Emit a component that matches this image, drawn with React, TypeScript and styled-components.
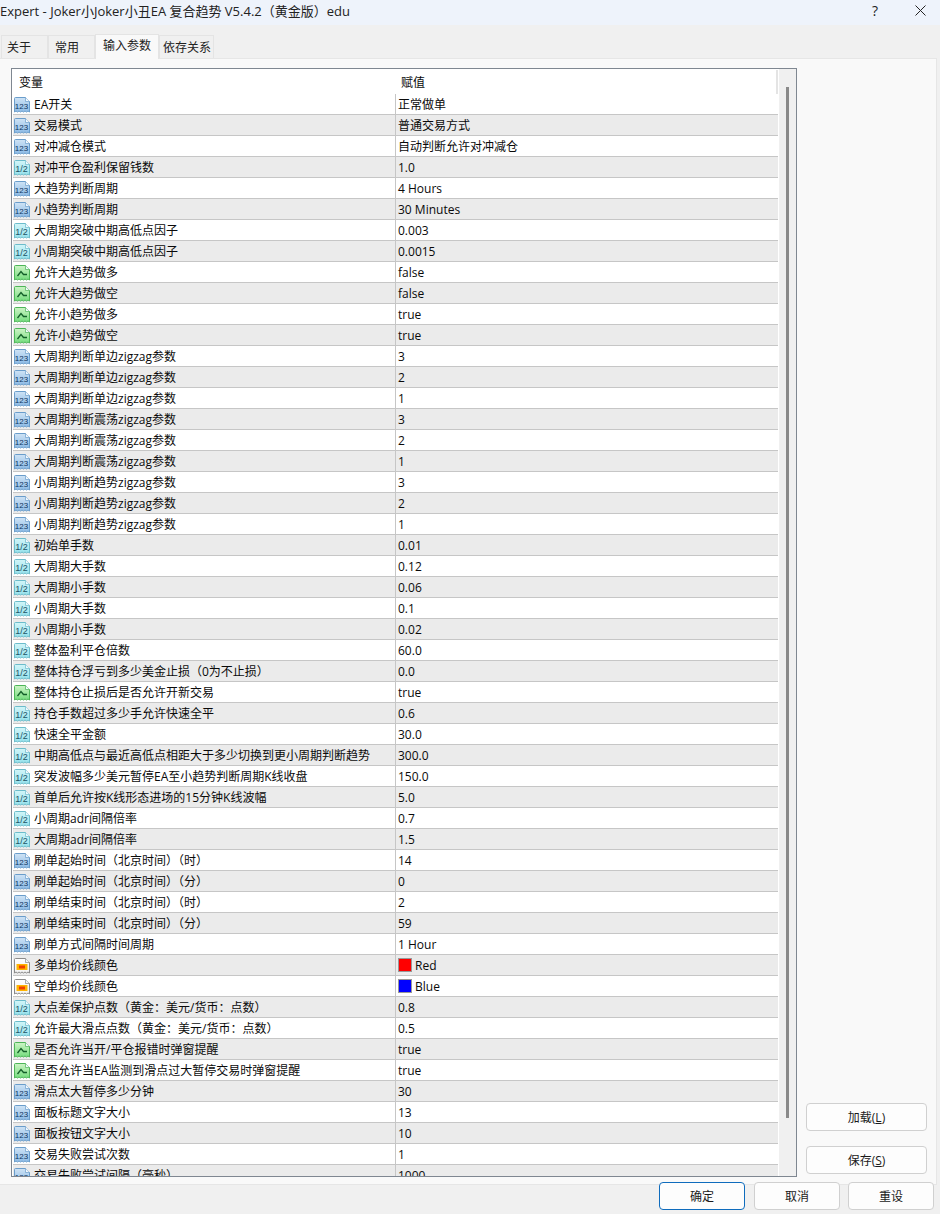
import React, { useId } from "react";
import styled, { createGlobalStyle } from "styled-components";

const Global = createGlobalStyle`
  html, body { margin: 0; padding: 0; background: #f0f0f0; overflow: hidden; }
  * { box-sizing: border-box; }
`;

const FONT = `"Open Sans", "Noto Sans CJK SC", sans-serif`;

const Win = styled.div`
  width: 940px; height: 1214px; display: flex; flex-direction: column;
  background: #f0f0f0; font-family: ${FONT}; font-size: 12px; color: #0a0a0a; overflow: hidden;
`;
const TitleBar = styled.div`
  height: 25px; flex: none; background: #eef3fb; display: flex; align-items: center;
  padding: 0 0 5px 0; font-size: 13px; color: #222;
`;
const TitleText = styled.div` flex: 1; white-space: nowrap; `;
const WinBtn = styled.div<{ $w: number }>`
  width: ${p => p.$w}px; display: flex; justify-content: center; align-items: center; font-size: 14px;
`;
const Tabs = styled.div`
  height: 33px; flex: none; display: flex; align-items: flex-end; padding: 9px 0 0 1px; position: relative; z-index: 1;
`;
const Tab = styled.div<{ $w: number; $pad: number; $active?: boolean }>`
  width: ${p => p.$w}px; height: ${p => (p.$active ? 25 : 23)}px;
  margin-bottom: ${p => (p.$active ? -1 : 0)}px;
  background: ${p => (p.$active ? "#f9f9f9" : "#f0f0f0")};
  border: 1px solid #e4e4e4; border-bottom: none; font-size: 12px;
  line-height: ${p => (p.$active ? 21 : 23)}px;
  padding-left: ${p => p.$pad}px; white-space: nowrap;
  color: #222;
`;
const Panel = styled.div`
  height: 1127px; flex: none; width: 937px; background: #f9f9f9; border: 1px solid #e6e6e6;
  border-left: none; display: flex; padding: 9px 0 0 11px;
`;
const ListBox = styled.div`
  width: 786px; height: 1109px; flex: none; border: 1px solid #7f8791; background: #fff;
  display: flex; overflow: hidden;
`;
const ListMain = styled.div` width: 766px; flex: none; overflow: hidden; padding-left: 1px; `;
const Head = styled.div`
  height: 25px; display: flex; align-items: center; position: relative; background: #fff; font-size: 12px;
`;
const HeadName = styled.div` width: 383px; padding-left: 6px; padding-top: 1px; flex: none; `;
const HeadVal = styled.div` padding-left: 5px; padding-top: 1px; `;
const HeadEnd = styled.div`
  position: absolute; right: 0; top: 1px; width: 2px; height: 24px; background: #e4e4e4;
`;
const Row = styled.div<{ $odd: boolean }>`
  height: 21px; display: flex; align-items: stretch; border-bottom: 1px solid #c6c6c6;
  background: ${p => (p.$odd ? "#ebebeb" : "#fff")}; white-space: nowrap;
`;
const NameCell = styled.div`
  width: 383px; flex: none; display: flex; align-items: center; gap: 4px; padding-left: 1px;
  border-right: 1px solid #c6c6c6; overflow: hidden;
`;
const ValueCell = styled.div` display: flex; align-items: center; gap: 3px; padding-left: 2px; `;
const Swatch = styled.span<{ $c: string }>`
  width: 14px; height: 14px; background: ${p => p.$c}; border: 1px solid #999; flex: none;
`;
const Scroll = styled.div` flex: 1; background: #f0f0f0; border-left: 1px solid #fff; position: relative; `;
const Thumb = styled.div`
  position: absolute; left: 7px; top: 18px; width: 3px; height: 1031px; background: #8a8a8a;
`;
const Side = styled.div`
  flex: 1; display: flex; flex-direction: column; gap: 15px; padding: 1035px 0 0 9px;
`;
const Button = styled.div<{ $w: number; $primary?: boolean }>`
  width: ${p => p.$w}px; height: 28px; flex: none; border-radius: 4px;
  border: 1px solid ${p => (p.$primary ? "#0f6cbd" : "#d0d0d0")};
  margin-right: ${p => (p.$primary ? 1 : 0)}px;
  background: #fdfdfd; display: flex; align-items: center; justify-content: center; font-size: 12px; color: #1a1a1a;
`;
const U = styled.span` text-decoration: underline; `;
const Footer = styled.div`
  flex: 1; display: flex; gap: 8px; padding: 0 0 0 659px; margin-top: -3px; position: relative;
`;

const IconSvg = styled.svg` flex: none; display: block; margin-top: 2px; `;
type Kind = "int" | "half" | "bool" | "color";

const WAVE = "M.5 1.5Q.5 .5 1.5 .5H11.5L15.5 4.5V15L14 14L12.5 15L11 14L9.5 15L8 14L6.5 15L5 14L3.5 15L2 14L.5 15Z";

const Icon = ({ kind }: { kind: Kind }) => {
  const id = useId();
  const cfg = {
    int: { a: "#cfe3f5", b: "#8dbbe6", s: "#6a9dcb" },
    half: { a: "#d2f5f8", b: "#96e2ec", s: "#6cbccb" },
    bool: { a: "#cdf4c6", b: "#75dd7e", s: "#4db558" },
    color: { a: "#ffffff", b: "#f2f2f2", s: "#8a8a8a" },
  }[kind];
  return (
    <IconSvg width="16" height="16" viewBox="0 0 16 16">
      <defs>
        <linearGradient id={id} x1="0" y1="0" x2="0" y2="1">
          <stop offset="0" stopColor={cfg.a} />
          <stop offset="1" stopColor={cfg.b} />
        </linearGradient>
      </defs>
      <path d={WAVE} fill={`url(#${id})`} stroke={cfg.s} strokeWidth="1" />
      <path d="M11.5 .5V4.5H15.5" fill="#f2f8fd" stroke={cfg.s} strokeWidth="0.7" />
      {kind === "int" && (
        <text x="7.5" y="11.5" textAnchor="middle" fontSize="8" fontWeight="400" fontFamily="Liberation Sans" fill="#0f3560">123</text>
      )}
      {kind === "half" && (
        <text x="7.5" y="11.5" textAnchor="middle" fontSize="9" fontFamily="Liberation Sans" fill="#1c5468">1/2</text>
      )}
      {kind === "bool" && <path d="M3.5 11L7 6.5L9.5 9.5H13" fill="none" stroke="#14602a" strokeWidth="1.3" />}
      {kind === "color" && (
        <>
          <rect x="2.5" y="6" width="11" height="6" fill="#ffb400" />
          <rect x="5" y="7.5" width="6" height="3" fill="#f04000" />
        </>
      )}
    </IconSvg>
  );
};

type P = [Kind, string, string];
const zig = (name: string): P[] => ["3", "2", "1"].map(v => ["int", name, v] as P);
const rows: P[] = [
  ["int", "EA开关", "正常做单"],
  ["int", "交易模式", "普通交易方式"],
  ["int", "对冲减仓模式", "自动判断允许对冲减仓"],
  ["half", "对冲平仓盈利保留钱数", "1.0"],
  ["int", "大趋势判断周期", "4 Hours"],
  ["int", "小趋势判断周期", "30 Minutes"],
  ["half", "大周期突破中期高低点因子", "0.003"],
  ["half", "小周期突破中期高低点因子", "0.0015"],
  ["bool", "允许大趋势做多", "false"],
  ["bool", "允许大趋势做空", "false"],
  ["bool", "允许小趋势做多", "true"],
  ["bool", "允许小趋势做空", "true"],
  ...zig("大周期判断单边zigzag参数"),
  ...zig("大周期判断震荡zigzag参数"),
  ...zig("小周期判断趋势zigzag参数"),
  ["half", "初始单手数", "0.01"],
  ["half", "大周期大手数", "0.12"],
  ["half", "大周期小手数", "0.06"],
  ["half", "小周期大手数", "0.1"],
  ["half", "小周期小手数", "0.02"],
  ["half", "整体盈利平仓倍数", "60.0"],
  ["half", "整体持仓浮亏到多少美金止损（0为不止损）", "0.0"],
  ["bool", "整体持仓止损后是否允许开新交易", "true"],
  ["half", "持仓手数超过多少手允许快速全平", "0.6"],
  ["half", "快速全平金额", "30.0"],
  ["half", "中期高低点与最近高低点相距大于多少切换到更小周期判断趋势", "300.0"],
  ["half", "突发波幅多少美元暂停EA至小趋势判断周期K线收盘", "150.0"],
  ["half", "首单后允许按K线形态进场的15分钟K线波幅", "5.0"],
  ["half", "小周期adr间隔倍率", "0.7"],
  ["half", "大周期adr间隔倍率", "1.5"],
  ["int", "刷单起始时间（北京时间）（时）", "14"],
  ["int", "刷单起始时间（北京时间）（分）", "0"],
  ["int", "刷单结束时间（北京时间）（时）", "2"],
  ["int", "刷单结束时间（北京时间）（分）", "59"],
  ["int", "刷单方式间隔时间周期", "1 Hour"],
  ["color", "多单均价线颜色", "Red"],
  ["color", "空单均价线颜色", "Blue"],
  ["half", "大点差保护点数（黄金：美元/货币：点数）", "0.8"],
  ["half", "允许最大滑点点数（黄金：美元/货币：点数）", "0.5"],
  ["bool", "是否允许当开/平仓报错时弹窗提醒", "true"],
  ["bool", "是否允许当EA监测到滑点过大暂停交易时弹窗提醒", "true"],
  ["int", "滑点太大暂停多少分钟", "30"],
  ["int", "面板标题文字大小", "13"],
  ["int", "面板按钮文字大小", "10"],
  ["int", "交易失败尝试次数", "1"],
  ["int", "交易失败尝试间隔（毫秒）", "1000"],
];

export default function App() {
  return (
    <Win>
      <Global />
      <TitleBar>
        <TitleText>Expert - Joker小Joker小丑EA 复合趋势 V5.4.2（黄金版）edu</TitleText>
        <WinBtn $w={20}>?</WinBtn>
        <WinBtn $w={15} />
        <WinBtn $w={40}>
          <svg width="11" height="11" viewBox="0 0 11 11"><path d="M.5 .5L10.5 10.5M10.5 .5L.5 10.5" stroke="#222" strokeWidth="1" /></svg>
        </WinBtn>
      </TitleBar>
      <Tabs>
        <Tab $w={47} $pad={5}>关于</Tab>
        <Tab $w={47} $pad={6}>常用</Tab>
        <Tab $w={64} $active $pad={7}>输入参数</Tab>
        <Tab $w={55} $pad={3}>依存关系</Tab>
      </Tabs>
      <Panel>
        <ListBox>
          <ListMain>
            <Head>
              <HeadName>变量</HeadName>
              <HeadVal>赋值</HeadVal>
              <HeadEnd />
            </Head>
            {rows.map(([k, n, v], i) => (
              <Row key={i} $odd={i % 2 === 1}>
                <NameCell><Icon kind={k} />{n}</NameCell>
                <ValueCell>
                  {k === "color" && <Swatch $c={v === "Red" ? "#ff0000" : "#0000ff"} />}
                  {v}
                </ValueCell>
              </Row>
            ))}
          </ListMain>
          <Scroll><Thumb /></Scroll>
        </ListBox>
        <Side>
          <Button $w={121}>加载(<U>L</U>)</Button>
          <Button $w={121}>保存(<U>S</U>)</Button>
        </Side>
      </Panel>
      <Footer>
        <Button $w={86} $primary>确定</Button>
        <Button $w={86}>取消</Button>
        <Button $w={86}>重设</Button>
      </Footer>
    </Win>
  );
}
